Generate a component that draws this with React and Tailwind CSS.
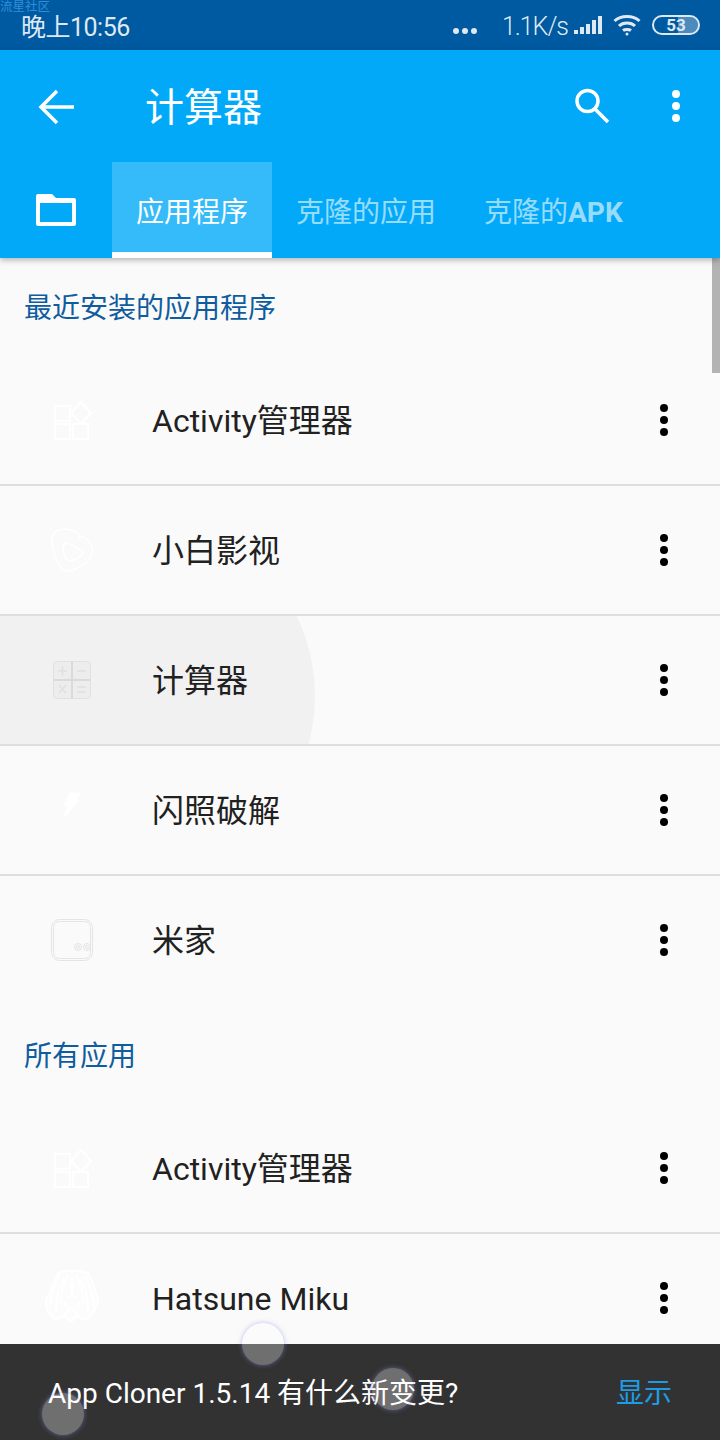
import { useState } from 'react';

const FONT = "font-['Roboto','Noto_Sans_CJK_SC',sans-serif]";

function Dots({ className }) {
  return (
    <div className={`flex flex-col gap-1 ${className}`}>
      <span className="w-2 h-2 rounded-full bg-current" />
      <span className="w-2 h-2 rounded-full bg-current" />
      <span className="w-2 h-2 rounded-full bg-current" />
    </div>
  );
}

function ActivityIcon() {
  return (
    <svg width="40" height="40" viewBox="0 0 40 40" fill="none" stroke="#fff" strokeWidth="2">
      <rect x="3" y="6" width="15" height="15" />
      <path d="M29 2 L39 13 L29 24 L19 13 Z" />
      <rect x="3" y="24" width="15" height="15" />
      <rect x="21" y="24" width="15" height="15" />
    </svg>
  );
}

function HeartIcon() {
  return (
    <svg width="46" height="48" viewBox="0 0 46 48" fill="none" stroke="#fff" strokeWidth="1.5">
      <path d="M6 6 C14 1 24 3 29 8 L30 12 L34 10 C40 14 46 22 42 30 C38 38 24 46 16 45 C8 43 3 20 3 14 C3 10 4 8 6 6 Z" />
      <path d="M16 17 C22 17 32 24 34 27 C31 33 22 36 18 34 C14 30 13 22 16 17 Z" />
    </svg>
  );
}

function CalcIcon() {
  return (
    <svg width="38" height="38" viewBox="0 0 38 38" fill="#ededed" stroke="#e0e0e0" strokeWidth="1">
      <rect x="0.5" y="0.5" width="37" height="37" rx="3" />
      <path d="M19 1 V37 M1 19 H37" strokeWidth="2" stroke="#dadada" />
      <path d="M5 10 H14 M9.5 5.500 V14.500 M24 10 H33 M6 24 L13 32 M13 24 L6 32 M24 26 H33 M24 31 H33" strokeWidth="1.500" />
    </svg>
  );
}

function BoltIcon() {
  return (
    <svg className="-mt-[10px]" width="20" height="26" viewBox="0 0 20 26" fill="#fff" stroke="#fff" strokeWidth="1">
      <path d="M8 1 H19 L14 8 H18 L2 25 L6 13 H2 Z" />
    </svg>
  );
}

function MijiaIcon() {
  return (
    <svg width="42" height="42" viewBox="0 0 42 42" fill="none" stroke="#e4e4e4" strokeWidth="1">
      <rect x="0.5" y="0.5" width="41" height="41" rx="8" />
      <rect x="2.5" y="2.500" width="37" height="37" rx="6" />
      <circle cx="27" cy="28" r="3.500" />
      <circle cx="27" cy="28" r="1.500" />
      <circle cx="36" cy="28" r="3.500" />
      <circle cx="36" cy="28" r="1.500" />
    </svg>
  );
}

function MikuIcon() {
  return (
    <svg width="56" height="56" viewBox="0 0 56 56" fill="none" stroke="#fff" strokeWidth="2">
      <path d="M14 3 C20 0 36 0 44 3 C48 12 54 24 54 32 C52 40 46 48 40 50 L32 46 L27 52 L20 46 L12 50 C6 46 1 38 2 30 C6 22 10 12 14 3 Z" fill="#fff" fillOpacity="0.35" />
      <path d="M20 8 C14 18 12 30 12 42 M16 6 C9 18 6 28 6 38 M24 5 C18 16 17 26 17 34 M28 6 V24 M32 5 C38 16 39 26 39 34 M36 8 C42 18 44 30 44 42 M41 6 C47 18 50 28 50 38" />
      <path d="M20 32 C24 42 32 42 36 32 M19 46 L27 38 L35 46 M22 26 H34" />
    </svg>
  );
}

function AppRow({ icon, name, divider = true, ripple = false }) {
  const [open, setOpen] = useState(false);
  return (
    <div
      onClick={() => setOpen(!open)}
      className={`relative h-[130px] shrink-0 overflow-hidden flex items-center pl-8 pr-[52px] ${divider ? 'border-b-2 border-[#dedede]' : 'pb-[2px]'}`}
    >
      {ripple && <div className="absolute left-[-49px] top-[-102px] w-[364px] h-[364px] rounded-full bg-[#f1f1f1]" />}
      <div className="relative w-20 flex justify-center">{icon}</div>
      <span className="relative ml-10 mt-[2px] text-[32px] leading-none text-[#212121]">{name}</span>
      <Dots className="relative ml-auto text-black" />
    </div>
  );
}

function SectionTitle({ children }) {
  return (
    <div className="h-[98px] shrink-0 flex items-center pl-6 pt-1 text-[28px] text-[#0f5c9e]">{children}</div>
  );
}

function Touch({ className }) {
  return (
    <div className={`absolute w-[42px] h-[42px] rounded-full bg-white/30 shadow-[0_0_5px_rgba(130,140,220,0.55)] ${className}`} />
  );
}

export default function App() {
  return (
    <div className={`relative w-[720px] h-[1440px] overflow-hidden flex flex-col bg-[#fafafa] ${FONT}`}>
      {/* Status bar */}
      <div className="h-[50px] shrink-0 bg-[#005aa1] flex items-center pl-[21px] pr-5 text-[#dfe9f3]">
        <span className="mt-[4px] text-[25px] leading-none tracking-[-0.5px]">晚上10:56</span>
        <div className="ml-auto flex gap-[3px] mt-[12px]">
          <span className="w-[6px] h-[6px] rounded-full bg-current" />
          <span className="w-[6px] h-[6px] rounded-full bg-current" />
          <span className="w-[6px] h-[6px] rounded-full bg-current" />
        </div>
        <span className="ml-[25px] mt-[2px] text-[25px] leading-none tracking-[-1px] font-light">1.1K/s</span>
        <svg className="ml-[6px]" width="28" height="20" viewBox="0 0 28 20" fill="currentColor">
          <rect x="0" y="15" width="4" height="4" />
          <rect x="6" y="12" width="4" height="7" />
          <rect x="12" y="9" width="4" height="10" />
          <rect x="18" y="5" width="4" height="14" />
          <rect x="24" y="1" width="4" height="18" />
        </svg>
        <svg className="ml-[11px]" width="28" height="22" viewBox="0 0 28 22" fill="none" stroke="currentColor" strokeWidth="3">
          <path d="M1.500 7 C8 1 20 1 26.500 7" />
          <path d="M6 12 C10 8 18 8 22 12" />
          <path d="M10 16.500 C12 15 16 15 18 16.500" />
          <circle cx="14" cy="20" r="1.500" fill="currentColor" stroke="none" />
        </svg>
        <div className="relative ml-[11px] w-[48px] h-[20px] rounded-full border-2 border-current overflow-hidden flex items-center justify-center">
          <div className="absolute right-0 top-0 bottom-0 w-[20px] bg-white/30" />
          <span className="relative text-[17px] leading-none font-bold">53</span>
        </div>
      </div>
      <span className="absolute left-0 top-0 text-[12.5px] leading-[13px] text-[#2f8fdc]">流星社区</span>

      {/* Toolbar */}
      <div className="relative z-10 shrink-0 bg-[#03a9f9] shadow-[0_2px_6px_rgba(0,0,0,0.3)]">
        <div className="h-[112px] flex items-center text-white">
          <svg className="ml-[38px] mt-[1px]" width="38" height="38" viewBox="0 0 38 38" fill="none" stroke="currentColor" strokeWidth="3.500">
            <path d="M36 19 H4 M19 3 L3 19 L19 35" />
          </svg>
          <span className="ml-[69px] mt-[5px] text-[39px] leading-none">计算器</span>
          <svg className="ml-auto" width="36" height="36" viewBox="0 0 36 36" fill="none" stroke="currentColor" strokeWidth="3.500">
            <circle cx="13.500" cy="13" r="10.500" />
            <path d="M21 21 L34 34" />
          </svg>
          <Dots className="ml-[62px] mr-10 text-white" />
        </div>
        <div className="h-[96px] flex text-[28px]">
          <div className="w-[112px] flex items-center justify-center pr-[1px]">
            <svg width="40" height="32" viewBox="0 0 40 32" fill="#fff" fillRule="evenodd">
              <path d="M2 0 H16 L20 4 H38 A2 2 0 0 1 40 6 V30 A2 2 0 0 1 38 32 H2 A2 2 0 0 1 0 30 V2 A2 2 0 0 1 2 0 Z M4 9 V28 H36 V9 Z" />
            </svg>
          </div>
          <div className="w-[160px] flex items-center justify-center pt-3 bg-white/20 border-b-[6px] border-white text-white">应用程序</div>
          <div className="pl-6 pr-[23px] pt-[6px] flex items-center text-white/60">克隆的应用</div>
          <div className="px-[25px] pt-[6px] flex items-center text-white/60">
            克隆的<span className="font-bold">APK</span>
          </div>
        </div>
      </div>

      {/* App list */}
      <div className="flex-1 min-h-0 overflow-hidden flex flex-col">
        <SectionTitle>最近安装的应用程序</SectionTitle>
        <AppRow icon={<ActivityIcon />} name="Activity管理器" />
        <AppRow icon={<HeartIcon />} name="小白影视" />
        <AppRow icon={<CalcIcon />} name="计算器" ripple />
        <AppRow icon={<BoltIcon />} name="闪照破解" />
        <AppRow icon={<MijiaIcon />} name="米家" divider={false} />
        <SectionTitle>所有应用</SectionTitle>
        <AppRow icon={<ActivityIcon />} name="Activity管理器" />
        <AppRow icon={<MikuIcon />} name="Hatsune Miku" />
      </div>

      {/* Snackbar */}
      <div className="h-24 shrink-0 bg-[#323232] flex items-center justify-between pl-12 pr-12 pt-1 text-[28px]">
        <span className="text-white">App Cloner 1.5.14 有什么新变更?</span>
        <span className="text-[#1e9be6]">显示</span>
      </div>

      {/* Scrollbar and touch markers lie over the page */}
      <div className="absolute right-0 top-[258px] w-2 h-[115px] bg-[#b3b3b3]" />
      <Touch className="left-[242px] top-[1323px]" />
      <Touch className="left-[372px] top-[1368px]" />
      <Touch className="left-[42px] top-[1393px]" />
    </div>
  );
}
